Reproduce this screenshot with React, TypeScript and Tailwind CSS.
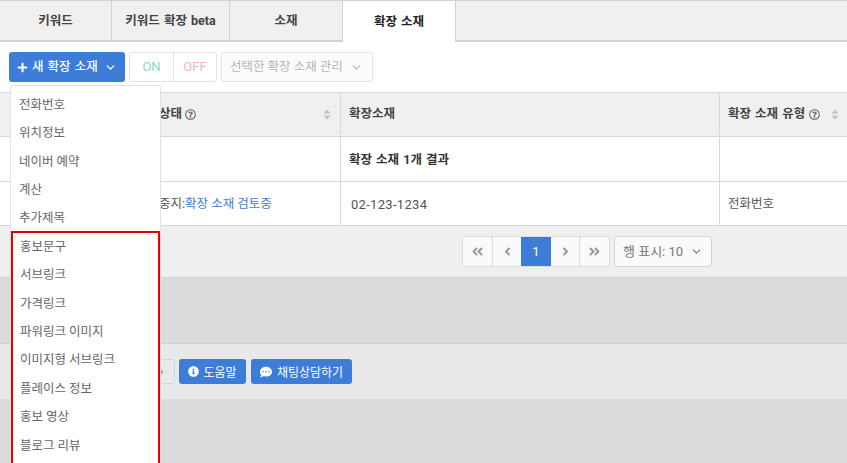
import React from 'react';
import { ChevronDown } from 'lucide-react';
import { FaAngleDoubleLeft, FaAngleDoubleRight, FaAngleLeft, FaAngleRight, FaCommentDots, FaInfoCircle, FaPlus, FaRegQuestionCircle } from 'react-icons/fa';

const menuTop = ['전화번호', '위치정보', '네이버 예약', '계산', '추가제목'];
const menuBoxed = ['홍보문구', '서브링크', '가격링크', '파워링크 이미지', '이미지형 서브링크', '플레이스 정보', '홍보 영상', '블로그 리뷰'];

function SortArrows() {
  return (
    <svg width="8" height="11" viewBox="0 0 8 11" className="shrink-0">
      <path d="M4 0.5 L7.5 4.5 L0.5 4.5 Z M4 10.5 L0.5 6.5 L7.5 6.5 Z" fill="#c2c2c2" />
    </svg>
  );
}

function Tab({ label, active, width }: { label: string; active?: boolean; width: string }) {
  return (
    <div
      className={`flex h-full items-center justify-center pt-[2px] text-[12.5px] font-bold [word-spacing:1px] ${width} ${
        active ? 'bg-white text-[#222]' : 'border-r border-b-2 border-[#d2d2d2] bg-[#f0f0f0] text-[#444]'
      }`}
    >
      {label}
    </div>
  );
}

export default function App() {
  return (
    <div className="relative h-[463px] w-[847px] overflow-hidden bg-[#dbdbdb] font-['Roboto','Noto_Sans_CJK_KR',sans-serif] text-[12.5px] text-[#555]">
      {/* Tabs */}
      <div className="flex h-[42px] border-t border-[#d2d2d2]">
        <Tab label="키워드" width="w-[112px]" />
        <Tab label="키워드 확장 beta" width="w-[118px]" />
        <Tab label="소재" width="w-[113px]" />
        <Tab label="확장 소재" active width="w-[112px]" />
        <div className="flex-1 border-b-2 border-l border-[#d2d2d2] bg-[#f0f0f0]" />
      </div>

      {/* Toolbar */}
      <div className="flex h-[50px] items-start gap-1 bg-white pl-[9px] pt-[10px]">
        <div className="flex h-[30px] w-[116px] items-center rounded-[3px] bg-[#3d7dd8] pl-[8px] pr-[8px] text-white">
          <FaPlus size={11} />
          <span className="ml-[4px] font-medium [word-spacing:1px]">새 확장 소재</span>
          <ChevronDown size={13} strokeWidth={2.5} className="ml-auto" />
        </div>
        <div className="flex h-[30px] w-[88px] rounded-[3px] border border-[#e3e3e3] text-[13px]">
          <span className="flex w-[44px] items-center justify-center border-r border-[#e3e3e3] text-[#8ed8b6]">ON</span>
          <span className="flex flex-1 items-center justify-center text-[#f0b5b5]">OFF</span>
        </div>
        <div className="flex h-[30px] w-[152px] items-center justify-between rounded-[3px] border border-[#e3e3e3] bg-[#fcfcfc] pl-[8px] pr-[9px] text-[#b4b4b4]">
          <span>선택한 확장 소재 관리</span>
          <ChevronDown size={13} />
        </div>
      </div>

      {/* Table */}
      <div className="bg-white">
        <div className="flex h-[45px] items-center border-y border-[#d8d8d8] bg-[#f0f0f0] pb-[1px] font-bold text-[#444]">
          <div className="flex h-full w-[341px] items-center justify-between border-r border-[#d8d8d8] pl-[133px] pr-[9px]">
            <span className="flex items-center gap-[3px]">
              노출 상태 <FaRegQuestionCircle size={11} className="text-[#666]" />
            </span>
            <SortArrows />
          </div>
          <div className="flex h-full w-[379px] items-center border-r border-[#d8d8d8] pl-[8px]">확장소재</div>
          <div className="flex h-full flex-1 items-center justify-between pl-[8px] pr-[8px]">
            <span className="flex items-center gap-[4px] [word-spacing:1px]">
              확장 소재 유형 <FaRegQuestionCircle size={11} className="text-[#666]" />
            </span>
            <SortArrows />
          </div>
        </div>
        <div className="flex h-[45px] items-center border-b border-[#d8d8d8] font-bold text-[#333]">
          <div className="h-full w-[341px] border-r border-[#d8d8d8]" />
          <div className="flex h-full w-[379px] items-center border-r border-[#d8d8d8] pl-[8px] pt-[2px] [word-spacing:1px]">확장 소재 1개 결과</div>
          <div className="flex-1" />
        </div>
        <div className="flex h-[44px] items-center border-b border-[#d8d8d8]">
          <div className="flex h-full w-[341px] items-center border-r border-[#d8d8d8] pl-[136px] pt-[2px]">
            일시중지:<span className="text-[#3d7dd8]">확장 소재 검토중</span>
          </div>
          <div className="flex h-full w-[379px] items-center border-r border-[#d8d8d8] pl-[10px] pt-[2px] text-[13px] tracking-[0.3px]">02-123-1234</div>
          <div className="flex-1 pl-[8px] pt-[2px]">전화번호</div>
        </div>
      </div>

      {/* Pagination */}
      <div className="flex h-[52px] items-start border-b border-[#d2d2d2] bg-[#efefef] pl-[462px] pt-[10px]">
        <div className="flex h-[31px] w-[148px] overflow-hidden rounded-[3px] border border-[#dcdcdc] bg-[#fafafa] text-[#999]">
          <span className="flex w-[30px] items-center justify-center border-r border-[#dcdcdc]"><FaAngleDoubleLeft size={13} /></span>
          <span className="flex w-[28px] items-center justify-center"><FaAngleLeft size={13} /></span>
          <span className="flex w-[30px] items-center justify-center bg-[#3d7dd8] text-[13px] text-white">1</span>
          <span className="flex w-[29px] items-center justify-center border-r border-[#dcdcdc]"><FaAngleRight size={13} /></span>
          <span className="flex flex-1 items-center justify-center"><FaAngleDoubleRight size={13} /></span>
        </div>
        <div className="ml-1 flex h-[31px] w-[98px] items-center justify-between rounded-[3px] border border-[#d4d4d4] bg-[#fafafa] pl-[8px] pr-[8px] text-[13px] text-[#777]">
          <span className="pt-[1px]">행 표시: 10</span>
          <ChevronDown size={13} />
        </div>
      </div>

      <div className="h-[66px] border-b border-[#cfcfcf]" />

      {/* Bottom bar */}
      <div className="flex h-[55px] items-start bg-[#e9e9e9] pl-[60px] pt-[15px]">
        <div className="flex h-[25px] w-[115px] items-center justify-end rounded-[3px] border border-[#d4d4d4] pr-[7px] text-[#aaa]">
          <FaAngleRight size={12} />
        </div>
        <div className="ml-[4px] flex h-[25px] w-[67px] items-center justify-center gap-[4px] rounded-[3px] bg-[#3d7dd8] text-[12px] text-white">
          <FaInfoCircle size={11} />
          <span className="pt-[2px]">도움말</span>
        </div>
        <div className="ml-[5px] flex h-[25px] w-[101px] items-center justify-center gap-[5px] rounded-[3px] bg-[#3d7dd8] text-[12px] text-white">
          <FaCommentDots size={12} />
          <span className="pt-[2px]">채팅상담하기</span>
        </div>
      </div>

      {/* Dropdown menu over the table */}
      <div className="absolute left-[10px] top-[85px] w-[151px] rounded-t-[3px] border border-[#e2e2e2] bg-white pt-[3px] text-[#666]">
        {menuTop.map((item) => (
          <div key={item} className="flex h-[28.4px] items-center pl-[8px] pt-[4px]">{item}</div>
        ))}
        <div className="h-[240px] border-2 border-[#e60000]">
          <div className="-mt-[2px]">
            {menuBoxed.map((item) => (
              <div key={item} className="flex h-[28.4px] items-center pl-[7px] pt-[4px]">{item}</div>
            ))}
          </div>
        </div>
      </div>
    </div>
  );
}
